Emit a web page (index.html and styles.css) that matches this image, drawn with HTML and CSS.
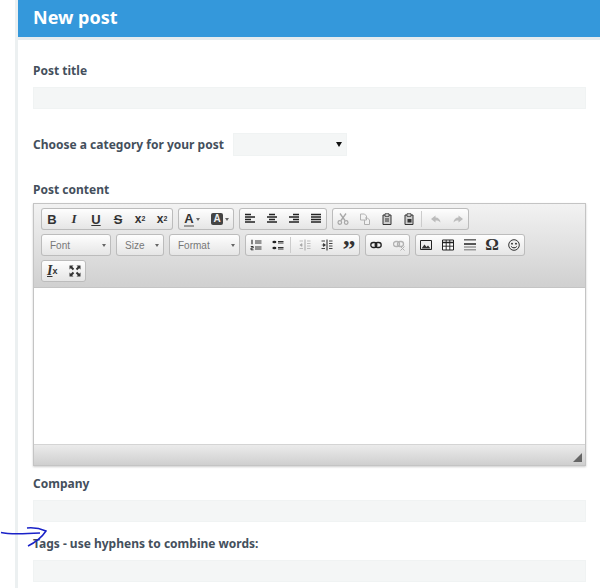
FILE: index.html
```html
<!DOCTYPE html>
<html>
<head>
    <meta charset="UTF-8">
    <title>New post</title>
    <link rel="stylesheet" href="styles.css">
</head>
<body>
<div class="page">
    <div class="panel-title"><h1>New post</h1></div>
    <form class="post-form">
        <label class="field-label first">Post title</label>
        <input class="text-input" type="text">

        <div class="category-row">
            <label class="field-label">Choose a category for your post</label>
            <div class="select-box"><svg width="6" height="5" viewBox="0 0 6 5"><path d="M0 0h6L3 5z" fill="#111"/></svg></div>
        </div>

        <label class="field-label content-label">Post content</label>
        <div class="editor">
            <div class="toolbar">
                <div class="tb-row">
                    <div class="tb-group">
                        <span class="btn glyph">B</span>
                        <span class="btn glyph it serif">I</span>
                        <span class="btn glyph under">U</span>
                        <span class="btn glyph strike">S</span>
                        <span class="btn glyph small">x<sub>2</sub></span>
                        <span class="btn glyph small">x<sup>2</sup></span>
                    </div>
                    <div class="tb-group">
                        <span class="btn wide"><span class="glyph-a">A</span><i class="mini-arrow"></i></span>
                        <span class="btn wide"><span class="glyph-box">A</span><i class="mini-arrow"></i></span>
                    </div>
                    <div class="tb-group">
                        <span class="btn"><svg class="ic" viewBox="0 0 12 12"><path d="M1 1.500h6M1 4h10M1 6.500h6M1 9h10" stroke="#222" stroke-width="1.300"/></svg></span>
                        <span class="btn"><svg class="ic" viewBox="0 0 12 12"><path d="M3 1.500h6M1 4h10M3 6.500h6M1 9h10" stroke="#222" stroke-width="1.300"/></svg></span>
                        <span class="btn"><svg class="ic" viewBox="0 0 12 12"><path d="M5 1.500h6M1 4h10M5 6.500h6M1 9h10" stroke="#222" stroke-width="1.300"/></svg></span>
                        <span class="btn"><svg class="ic" viewBox="0 0 12 12"><path d="M1 1.500h10M1 4h10M1 6.500h10M1 9h10" stroke="#222" stroke-width="1.300"/></svg></span>
                    </div>
                    <div class="tb-group">
                        <span class="btn off"><svg class="ic" viewBox="0 0 12 12"><path d="M3 .5l5 7M9 .5l-5 7" stroke="#777" stroke-width="1.300" fill="none"/><circle cx="2.800" cy="9.500" r="1.800" fill="none" stroke="#777" stroke-width="1.200"/><circle cx="9.200" cy="9.500" r="1.800" fill="none" stroke="#777" stroke-width="1.200"/></svg></span>
                        <span class="btn off"><svg class="ic" viewBox="0 0 12 12"><path d="M1.500 1h4l2 2v4h-6zM6 5h2.500l2 2v4.500h-5V7" fill="#f4f4f4" stroke="#888"/></svg></span>
                        <span class="btn"><svg class="ic" viewBox="0 0 12 12"><path d="M2 2h8v9.500H2z" fill="#ccc" stroke="#333"/><path d="M4 .8h4v2.500H4z" fill="#eee" stroke="#333" stroke-width=".9"/><path d="M4 6h4M4 8h4" stroke="#333"/></svg></span>
                        <span class="btn"><svg class="ic" viewBox="0 0 12 12"><path d="M2 2h8v9.500H2z" fill="#ccc" stroke="#333"/><path d="M4 .8h4v2.500H4z" fill="#eee" stroke="#333" stroke-width=".9"/><path d="M4.500 6h4v3.500h-4z" fill="#333"/></svg></span>
                        <span class="tb-sep"></span>
                        <span class="btn off"><svg class="ic" viewBox="0 0 12 12"><path d="M5.500 2.500L1 6l4.500 3.500V7.500c2 0 3.500.3 5 2-.3-3-2-5-5-5z" fill="#999"/></svg></span>
                        <span class="btn off"><svg class="ic" viewBox="0 0 12 12"><path d="M6.500 2.500L11 6l-4.500 3.500V7.500c-2 0-3.500.3-5 2 .3-3 2-5 5-5z" fill="#999"/></svg></span>
                    </div>
                </div>
                <div class="tb-row">
                    <div class="combo combo-font">Font<i class="mini-arrow"></i></div>
                    <div class="combo combo-size">Size<i class="mini-arrow"></i></div>
                    <div class="combo combo-format">Format<i class="mini-arrow"></i></div>
                    <div class="tb-group">
                        <span class="btn"><svg class="ic" viewBox="0 0 12 12"><path d="M5 2h6.500M5 4h6.500M5 8h6.500M5 10h6.500" stroke="#333"/><path d="M2 .8v4.400" stroke="#222" stroke-width="1.100"/><path d="M.8 7.500h2.400v1.500H1v1.800h2.500" fill="none" stroke="#222" stroke-width=".9"/></svg></span>
                        <span class="btn"><svg class="ic" viewBox="0 0 12 12"><ellipse cx="2.400" cy="3" rx="2" ry="1.300" fill="#222"/><ellipse cx="2.400" cy="9" rx="2" ry="1.300" fill="#222"/><path d="M6 2.500h5.500M6 8.500h5.500M6 4h5.500M6 10h5.500" stroke="#333"/></svg></span>
                        <span class="tb-sep"></span>
                        <span class="btn off"><svg class="ic" viewBox="0 0 12 12"><path d="M6 .5v11" stroke="#777"/><path d="M8 2h3.500M8 4.500h3.500M8 7h3.500M8 9.500h3.500M.5 2h3.500M.5 9.500h3.500" stroke="#999"/><path d="M.8 6h2.500M1 6l2-1.500v3z" stroke="#777" fill="#777" stroke-width=".6"/></svg></span>
                        <span class="btn"><svg class="ic" viewBox="0 0 12 12"><path d="M6 .5v11" stroke="#222"/><path d="M8 2h3.500M8 4.500h3.500M8 7h3.500M8 9.500h3.500M.5 2h3.500M.5 9.500h3.500" stroke="#444"/><path d="M.8 6h2M4.500 6l-2-1.500v3z" stroke="#222" fill="#222" stroke-width=".6"/></svg></span>
                        <span class="btn glyph quote">&#x201D;</span>
                    </div>
                    <div class="tb-group">
                        <span class="btn link-btn"><svg class="ic" viewBox="0 0 12 12"><rect x=".8" y="3.500" width="6" height="5" rx="2.500" fill="none" stroke="#222" stroke-width="1.300"/><rect x="5.200" y="3.500" width="6" height="5" rx="2.500" fill="none" stroke="#222" stroke-width="1.300"/></svg></span>
                        <span class="btn link-btn off"><svg class="ic" viewBox="0 0 12 12"><rect x=".5" y="2.500" width="6" height="5" rx="2.500" fill="none" stroke="#888" stroke-width="1.300"/><rect x="4.500" y="2.500" width="6" height="5" rx="2.500" fill="none" stroke="#888" stroke-width="1.300"/><path d="M7.500 7.500l4 4M11.500 7.500l-4 4" stroke="#888"/></svg></span>
                    </div>
                    <div class="tb-group">
                        <span class="btn"><svg class="ic" viewBox="0 0 12 12"><path d="M.5 1.500h11v9H.5z" fill="#eee" stroke="#222"/><path d="M1.500 9.500l3-4 2 2.500 1.500-1.500 2.500 3z" fill="#333"/></svg></span>
                        <span class="btn"><svg class="ic" viewBox="0 0 12 12"><path d="M.5 1h11v10H.5z" fill="#fff" stroke="#222"/><path d="M.5 3.500h11" stroke="#222" stroke-width="1.500"/><path d="M.5 7.200h11M4.200 1v10M7.800 1v10" stroke="#222" stroke-width=".9"/></svg></span>
                        <span class="btn"><svg class="ic" viewBox="0 0 12 12"><path d="M0 .8h12" stroke="#666" stroke-width="1.500"/><path d="M0 5h12" stroke="#222" stroke-width="1.500"/><path d="M0 8h12M0 10.800h12" stroke="#999" stroke-width="1.500"/></svg></span>
                        <span class="btn glyph omega">&#937;</span>
                        <span class="btn"><svg class="ic" viewBox="0 0 12 12"><circle cx="6" cy="6" r="5.300" fill="#eee" stroke="#333"/><circle cx="4" cy="4.700" r=".9" fill="#222"/><circle cx="8" cy="4.700" r=".9" fill="#222"/><path d="M3.200 7.500c1.500 1.800 4.100 1.800 5.600 0" fill="none" stroke="#222"/></svg></span>
                    </div>
                </div>
                <div class="tb-row">
                    <div class="tb-group">
                        <span class="btn link-btn glyph clear"><u>I</u><sub>x</sub></span>
                        <span class="btn link-btn"><svg class="ic" viewBox="0 0 12 12"><path d="M.5.500h4l-1.300 1.300 2 2-1.400 1.400-2-2L.5 4.500zM11.500.500v4l-1.300-1.300-2 2-1.400-1.400 2-2L7.500.500zM.5 11.500v-4l1.300 1.300 2-2 1.400 1.400-2 2 1.300 1.300zM11.500 11.500h-4l1.300-1.300-2-2 1.400-1.400 2 2 1.300-1.300z" fill="#333"/></svg></span>
                    </div>
                </div>
            </div>
            <div class="editor-body"></div>
            <div class="editor-foot"><svg class="resize" width="9" height="9" viewBox="0 0 9 9"><path d="M9 0v9H0z" fill="#666"/></svg></div>
        </div>

        <label class="field-label company-label">Company</label>
        <input class="text-input" type="text">

        <label class="field-label tags-label">Tags - use hyphens to combine words:</label>
        <input class="text-input" type="text">
    </form>
</div>
<!-- pen scribble drawn on top of the screenshot -->
<svg class="scribble" width="50" height="30" viewBox="0 0 50 30"><path d="M1 5.500c8 2 22 1.500 39 .5M27 1c5-.5 12 0 19 3-4 6-10 11-18 15" fill="none" stroke="#1a22c8" stroke-width="1.500"/></svg>
</body>
</html>
```

FILE: styles.css
```css
body,h1,form{
    margin: 0;
    padding: 0;
}
body{
    background-color: #fff;
    font-family: "Noto Sans", Arial, sans-serif;
    color: #444f5c;
}
.page{
    margin-left: 15px;
    border-left: 3px solid #ecf0f1;
    min-height: 588px;
    box-sizing: border-box;
}
.panel-title{
    height: 37px;
    padding-left: 15px;
    background-color: #3498db;
    border-bottom: 3px solid #e6ecef;
}
.panel-title h1{
    font-size: 18px;
    line-height: 35px;
    font-weight: 700;
    color: #fff;
}
.post-form{
    display: flex;
    flex-direction: column;
    padding: 0 14px 0 15px;
}
.field-label{
    display: block;
    font-size: 12px;
    line-height: 16px;
    font-weight: 700;
}
.first{
    margin-top: 23px;
}
.text-input{
    box-sizing: border-box;
    height: 22px;
    margin: 0;
    margin-top: 8px;
    padding: 0;
    border: 1px solid #f0f3f3;
    background-color: #f4f6f6;
    outline: none;
}
.category-row{
    display: flex;
    align-items: center;
    gap: 9px;
    margin-top: 24px;
}
.select-box{
    box-sizing: border-box;
    display: flex;
    justify-content: flex-end;
    align-items: center;
    width: 114px;
    height: 23px;
    padding-right: 4px;
    background-color: #f4f6f6;
    border: 1px solid #f0f3f3;
}
.content-label{
    margin-top: 26px;
}
.editor{
    margin-top: 5px;
    height: 263px;
    box-sizing: border-box;
    display: flex;
    flex-direction: column;
    border: 1px solid #c4c4c4;
    box-shadow: 0 1px 2px #ccc;
}
.toolbar{
    display: flex;
    flex-direction: column;
    gap: 4px;
    height: 84px;
    box-sizing: border-box;
    padding: 4px 7px 0;
    background: linear-gradient(#f2f2f2, #d0d0d0);
    border-bottom: 1px solid #c4c4c4;
}
.tb-row{
    display: flex;
    gap: 5px;
    height: 22px;
}
.tb-group,.combo{
    display: flex;
    align-items: center;
    height: 22px;
    box-sizing: border-box;
    border-radius: 3px;
    background: linear-gradient(#fff, #e4e4e4);
    box-shadow: inset 0 0 0 1px #bcbcbc;
}
.btn{
    display: flex;
    align-items: center;
    justify-content: center;
    width: 22px;
    height: 22px;
    flex: none;
}
.btn.wide{
    width: 28px;
    gap: 2px;
}
.btn.link-btn{
    width: 22.5px;
}
.btn.off{
    opacity: .6;
}
.ic{
    width: 12px;
    height: 12px;
}
.tb-sep{
    width: 4px;
    height: 16px;
    flex: none;
    box-sizing: border-box;
    border-left: 1px solid #ccc;
    margin-left: 1px;
}
.glyph{
    font-family: "Liberation Sans", Arial, sans-serif;
    font-size: 13px;
    font-weight: 700;
    color: #333;
}
.glyph.it{
    font-style: italic;
}
.glyph.serif{
    font-family: "Liberation Serif", serif;
}
.glyph.under{
    text-decoration: underline;
}
.glyph.strike{
    text-decoration: line-through;
}
.glyph.small{
    font-size: 12px;
}
.glyph sub,.glyph sup{
    font-size: 7px;
    line-height: 0;
}
.glyph.quote{
    font-family: "Liberation Serif", serif;
    font-size: 26px;
    line-height: 22px;
    padding-top: 9px;
    box-sizing: border-box;
}
.glyph.omega{
    font-family: "Liberation Serif", serif;
    font-size: 17px;
}
.glyph.clear{
    font-family: "Liberation Serif", serif;
    font-style: italic;
    font-size: 14px;
}
.glyph.clear sub{
    font-family: "Liberation Sans", Arial, sans-serif;
    font-style: normal;
    font-size: 9px;
}
.glyph-a{
    font: 700 13px/13px "Liberation Sans", Arial, sans-serif;
    color: #333;
    border-bottom: 2px solid #999;
}
.glyph-box{
    font: 700 10px/12px "Liberation Sans", Arial, sans-serif;
    width: 12px;
    text-align: center;
    color: #eee;
    background-color: #444;
    border-radius: 2px;
}
.mini-arrow{
    width: 0;
    height: 0;
    border-left: 2.5px solid transparent;
    border-right: 2.500px solid transparent;
    border-top: 3px solid #666;
}
.combo{
    justify-content: space-between;
    padding: 0 5px 0 9px;
    font: 10px "Liberation Sans", Arial, sans-serif;
    color: #777;
}
.combo-font{
    width: 70px;
}
.combo-size{
    width: 48px;
}
.combo-format{
    width: 71px;
}
.editor-body{
    flex: 1;
    background-color: #fff;
}
.editor-foot{
    display: flex;
    justify-content: flex-end;
    align-items: flex-end;
    height: 21px;
    padding: 0 3px 3px 0;
    box-sizing: border-box;
    background: linear-gradient(#ebebeb, #cfcfcf);
    border-top: 1px solid #d4d4d4;
}
.company-label{
    margin-top: 10px;
}
.tags-label{
    margin-top: 14px;
}
.scribble{
    position: absolute;
    left: 0;
    top: 527px;
}
```
